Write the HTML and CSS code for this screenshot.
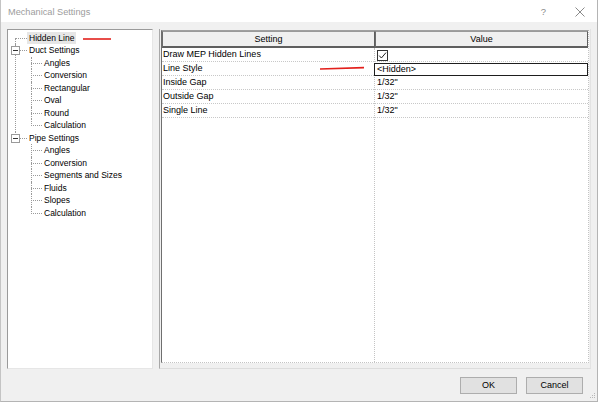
FILE: index.html
```html
<!DOCTYPE html>
<html>
<head>
<meta charset="utf-8">
<link rel="stylesheet" href="styles.css">
</head>
<body>
<div class="window">
  <div class="titlebar">
    <span class="title">Mechanical Settings</span>
    <span class="tb-help">?</span>
    <svg class="tb-close" width="10" height="10" viewBox="0 0 10 10"><path d="M0.5 0.5 L9.5 9.5 M9.5 0.5 L0.5 9.5" stroke="#8a8a8a" stroke-width="1" fill="none"/></svg>
  </div>
  <div class="content">
    <div class="main">
      <div class="tree-panel">
        <ul class="tree">
          <li class="node"><span class="label selected">Hidden Line</span></li>
          <li class="node">
            <span class="toggle"></span><span class="label">Duct Settings</span>
            <ul class="sub">
              <li class="child"><span class="label">Angles</span></li>
              <li class="child"><span class="label">Conversion</span></li>
              <li class="child"><span class="label">Rectangular</span></li>
              <li class="child"><span class="label">Oval</span></li>
              <li class="child"><span class="label">Round</span></li>
              <li class="child"><span class="label">Calculation</span></li>
            </ul>
          </li>
          <li class="node">
            <span class="toggle"></span><span class="label">Pipe Settings</span>
            <ul class="sub">
              <li class="child"><span class="label">Angles</span></li>
              <li class="child"><span class="label">Conversion</span></li>
              <li class="child"><span class="label">Segments and Sizes</span></li>
              <li class="child"><span class="label">Fluids</span></li>
              <li class="child"><span class="label">Slopes</span></li>
              <li class="child"><span class="label">Calculation</span></li>
            </ul>
          </li>
        </ul>
      </div>
      <div class="grid-panel">
        <div class="grid">
          <div class="grid-head">
            <div class="hcell">Setting</div>
            <div class="hcell">Value</div>
          </div>
          <div class="grid-body">
            <div class="col col-setting">
              <div class="cell">Draw MEP Hidden Lines</div>
              <div class="cell">Line Style</div>
              <div class="cell">Inside Gap</div>
              <div class="cell">Outside Gap</div>
              <div class="cell">Single Line</div>
            </div>
            <div class="col col-value">
              <div class="cell"><span class="checkbox"><svg width="9" height="9" viewBox="0 0 9 9"><path d="M1.2 4.6 L3.4 7 L8 1.6" stroke="#222" stroke-width="1" fill="none"/></svg></span></div>
              <div class="cell editing">&lt;Hidden&gt;</div>
              <div class="cell">1/32"</div>
              <div class="cell">1/32"</div>
              <div class="cell">1/32"</div>
            </div>
          </div>
        </div>
      </div>
    </div>
    <div class="buttons">
      <button class="btn">OK</button>
      <button class="btn">Cancel</button>
    </div>
  </div>
  <svg class="grip" width="7" height="7" viewBox="0 0 7 7"><g fill="#b8b8b8"><rect x="5" y="1" width="1" height="1"/><rect x="3" y="3" width="1" height="1"/><rect x="5" y="3" width="1" height="1"/><rect x="1" y="5" width="1" height="1"/><rect x="3" y="5" width="1" height="1"/><rect x="5" y="5" width="1" height="1"/></g></svg>
</div>
<svg class="annotations" width="600" height="404" viewBox="0 0 600 404">
  <path d="M83 39 L111 39" stroke="#e3201c" stroke-width="1.6" fill="none"/>
  <path d="M320 69 L364 67.6" stroke="#e3201c" stroke-width="1.6" fill="none"/>
</svg>
</body>
</html>
```

FILE: styles.css
```css
* { box-sizing: border-box; }
html, body { margin: 0; padding: 0; }
body {
  width: 600px;
  height: 404px;
  background: #ffffff;
  font-family: "Liberation Sans", Arial, sans-serif;
  position: relative;
  overflow: hidden;
}
.window {
  position: relative;
  width: 598px;
  height: 402px;
  border-left: 1px solid #c4c4c4;
  border-right: 1px solid #b4b4b4;
  border-bottom: 1px solid #b4b4b4;
  display: flex;
  flex-direction: column;
  background: #f0f0f0;
}
.titlebar {
  height: 22px;
  background: #ffffff;
  display: flex;
  align-items: center;
  padding-left: 7px;
  flex: none;
}
.title {
  font-size: 9.2px;
  color: #9c9c9c;
  flex: 1;
  padding-top: 1px;
}
.tb-help {
  font-size: 9.5px;
  color: #8a8a8a;
  margin-right: 29px;
}
.tb-close {
  margin-right: 12px;
  margin-top: 1px;
}
.content {
  flex: 1;
  display: flex;
  flex-direction: column;
  padding: 7px 6px 0 6px;
}
.main {
  display: flex;
  gap: 6px;
  height: 340px;
  flex: none;
}
/* tree */
.tree-panel {
  width: 146px;
  height: 340px;
  background: #fff;
  border-top: 1px solid #9a9a9a;
  border-left: 1px solid #9a9a9a;
  border-right: 1px solid #e6e6e6;
  border-bottom: 1px solid #e6e6e6;
  padding-top: 1.5px;
}
.tree, .sub {
  list-style: none;
  margin: 0;
  padding: 0;
}
.tree {
  font-size: 8.5px;
  color: #000;
}
.node {
  position: relative;
}
.node::after {
  content: "";
  position: absolute;
  left: 7px;
  top: 0;
  bottom: 0;
  border-left: 1px dotted #9a9a9a;
}
.node:first-child::after { top: 6px; }
.node:last-child::after { bottom: auto; height: 7px; }
.node > .label, .child > .label {
  position: relative;
  display: inline-block;
  height: 12.5px;
  line-height: 12.5px;
  padding: 0 2px;
  white-space: nowrap;
}
.node > .label { margin-left: 19px; }
.node > .label::before {
  content: "";
  position: absolute;
  left: -11px;
  top: 6px;
  width: 11px;
  border-top: 1px dotted #9a9a9a;
}
.label.selected { background: #e6e6e6; }
.toggle {
  position: absolute;
  left: 3px;
  top: 2px;
  width: 9px;
  height: 9px;
  border: 1px solid #9a9a9a;
  background: #fff;
  z-index: 2;
}
.toggle::after {
  content: "";
  position: absolute;
  left: 1px;
  top: 3px;
  width: 5px;
  height: 1px;
  background: #333;
}
.sub { position: relative; }
.child { position: relative; }
.child::after {
  content: "";
  position: absolute;
  left: 23px;
  top: 0;
  bottom: 0;
  border-left: 1px dotted #9a9a9a;
}
.child:last-child::after { bottom: auto; height: 7px; }
.child > .label { margin-left: 34px; }
.child > .label::before {
  content: "";
  position: absolute;
  left: -11px;
  top: 6px;
  width: 11px;
  border-top: 1px dotted #9a9a9a;
}
/* grid */
.grid-panel {
  width: 432px;
  height: 340px;
  border-left: 1px solid #a8a8a8;
  border-right: 1px solid #e3e3e3;
  border-bottom: 1px solid #dcdcdc;
  padding: 1px 1px 5px 1px;
}
.grid {
  height: 100%;
  background: #fff;
  border-left: 1px solid #6f6f6f;
  border-top: 1px solid #a0a0a0;
  border-right: 1px dotted #c4c4c4;
  border-bottom: 1px dotted #c4c4c4;
  display: flex;
  flex-direction: column;
  font-size: 9px;
  color: #000;
}
.grid-head {
  display: grid;
  grid-template-columns: 213px 213px;
  height: 17px;
  flex: none;
}
.hcell {
  background: #f0f0f0;
  border-top: 1px solid #9a9a9a;
  border-left: 1px solid #6d6d6d;
  border-right: 1px solid #5f5f5f;
  border-bottom: 2px solid #5f5f5f;
  text-align: center;
  line-height: 14px;
}
.grid-body {
  flex: 1;
  display: grid;
  grid-template-columns: 213px 213px;
}
.col-setting { border-right: 1px dotted #c4c4c4; }
.cell {
  height: 14px;
  line-height: 13px;
  border-bottom: 1px dotted #c8c8c8;
  padding-left: 1px;
  white-space: nowrap;
}
.col-value .cell { padding-left: 2px; }
.cell.editing {
  margin-left: -1px;
  margin-top: 1px;
  height: 13px;
  line-height: 11px;
  border: 1px solid #1e1e1e;
  padding-left: 2px;
}
.checkbox {
  display: inline-block;
  width: 11px;
  height: 11px;
  margin-top: 2px;
  border: 1px solid #333;
  background: #fff;
  position: relative;
}
.checkbox svg {
  position: absolute;
  left: 0;
  top: 0;
}
/* buttons */
.buttons {
  display: flex;
  justify-content: flex-end;
  gap: 9px;
  padding-right: 8px;
  margin-top: 8px;
}
.btn {
  width: 57px;
  height: 17px;
  margin: 0;
  padding: 0;
  background: #e1e1e1;
  border: 1px solid #adadad;
  font-family: "Liberation Sans", Arial, sans-serif;
  font-size: 9px;
  color: #000;
  line-height: 15px;
}
.grip {
  position: absolute;
  right: 1px;
  bottom: 2px;
}
.annotations {
  position: absolute;
  left: 0;
  top: 0;
  pointer-events: none;
}
```
